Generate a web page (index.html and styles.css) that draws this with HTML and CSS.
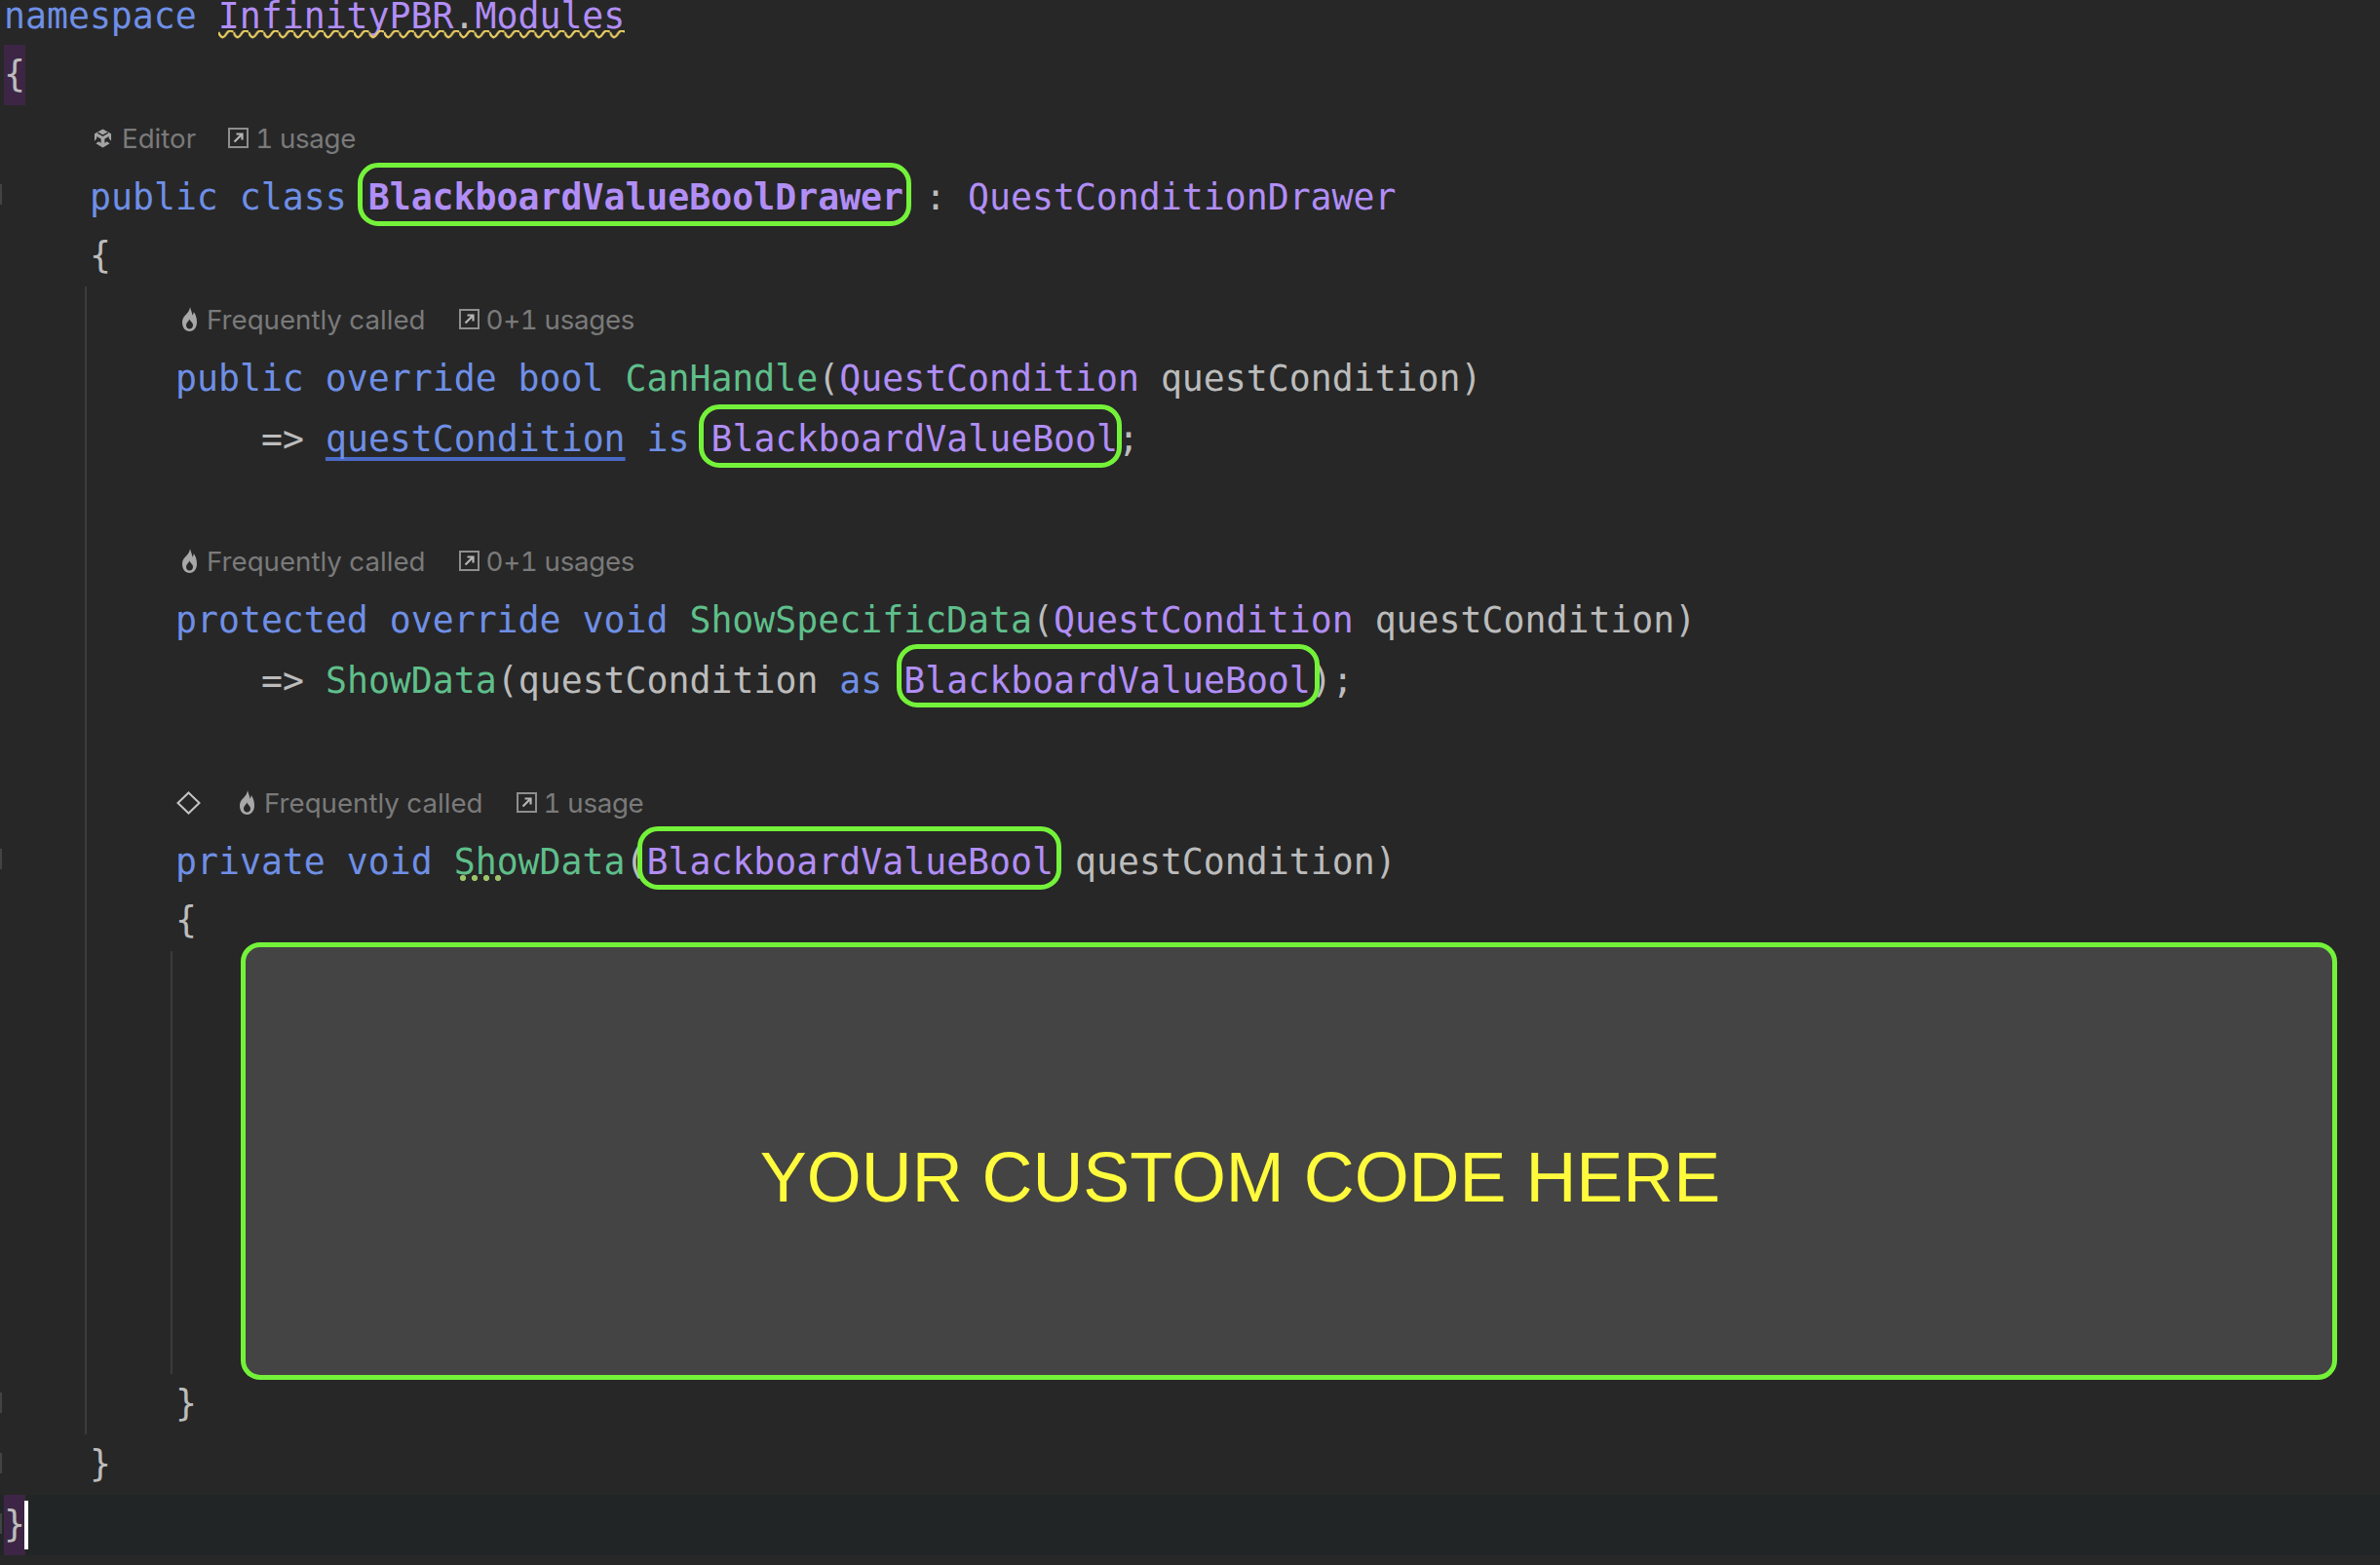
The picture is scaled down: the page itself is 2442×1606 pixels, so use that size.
FILE: index.html
```html
<!DOCTYPE html>
<html lang="en">
<head>
<meta charset="utf-8">
<title>BlackboardValueBoolDrawer</title>
<link rel="stylesheet" href="styles.css">
</head>
<body>
<svg class="defs" width="0" height="0" aria-hidden="true">
  <symbol id="i-link" viewBox="0 0 21 21">
    <rect x="1" y="1" width="19" height="19" fill="none" stroke="#8e8e8e" stroke-width="2"/>
    <path d="M6.5 14.5 14 7M8.5 6.5h6v6" fill="none" stroke="#b4b4b4" stroke-width="2.2"/>
  </symbol>
  <symbol id="i-flame" viewBox="0 0 15 25">
    <path fill-rule="evenodd" fill="#a8a8a8" d="M8 0C9 3.500 10 5.500 10.500 8.500C11.300 7.500 11.700 6.500 11.800 5C13.800 8 15 11 15 15.500C15 21 12 25 7.500 25C3 25 0 21 0 16C0 10.500 3.500 8.500 5.800 5.500C7 3.800 7.800 2 8 0ZM7.300 12.500C6.500 15 4 16 4 18.800C4 21 5.500 22.600 7.500 22.600C9.500 22.600 11 21 11 18.800C11 16 8.800 15.500 7.300 12.500Z"/>
  </symbol>
  <symbol id="i-unity" viewBox="0 0 20 20">
    <path fill="#a4a4a4" d="M10 0 19 5V13L16.500 10V8L12 10.500V15L14.500 13.500 17.500 15.500 10 20 2.500 15.500 5.500 13.500 8 15V10.500L3.500 8V10L1 13V5Z"/>
    <path d="M4.500 3.800 10 7 15.500 3.800" fill="none" stroke="#272727" stroke-width="1.400"/>
  </symbol>
  <symbol id="i-diamond" viewBox="0 0 25 24">
    <path d="M12.500 1.500 23.500 12 12.500 22.500 1.500 12Z" fill="none" stroke="#c4c4c4" stroke-width="2"/>
  </symbol>
  <pattern id="wave" width="15.45" height="9" patternUnits="userSpaceOnUse">
    <path d="M0 2 Q3.860 11 7.720 4.500 Q11.590 -2 15.450 2" fill="none" stroke="#e8cb62" stroke-width="2.400"/>
  </pattern>
</svg>

<main class="editor">
  <div class="line"><span class="kw">namespace</span> <span class="wavy ty">InfinityPBR<span class="pl">.</span>Modules<svg class="wave" width="417" height="9" aria-hidden="true"><rect width="417" height="9" fill="url(#wave)"/></svg></span></div>
  <div class="line brace"><span class="match pl">{</span></div>

  <section class="scope">
    <div class="inlay inlay-class">
      <span class="hint hint-unity"><svg class="ico ico-unity"><use href="#i-unity"/></svg>Editor</span>
      <span class="hint hint-usage"><svg class="ico ico-link"><use href="#i-link"/></svg>1 usage</span>
    </div>
    <div class="line mark"><span class="kw">public class</span> <span class="hl hl-class ty bold">BlackboardValueBoolDrawer</span> <span class="pl">:</span> <span class="ty">QuestConditionDrawer</span></div>
    <div class="line brace pl">{</div>

    <div class="guide">
      <div class="scope">
        <div class="inlay">
          <span class="hint hint-fire"><svg class="ico ico-flame"><use href="#i-flame"/></svg>Frequently called</span>
          <span class="hint hint-usage"><svg class="ico ico-link"><use href="#i-link"/></svg>0+1 usages</span>
        </div>
        <div class="line"><span class="kw">public override bool</span> <span class="fn">CanHandle</span><span class="pl">(</span><span class="ty">QuestCondition</span> <span class="pl">questCondition)</span></div>
        <div class="line cont"><span class="pl">=&gt;</span> <span class="kw ref">questCondition</span> <span class="kw">is</span> <span class="hl hl-is ty">BlackboardValueBool</span><span class="pl">;</span></div>
        <div class="line"></div>

        <div class="inlay">
          <span class="hint hint-fire"><svg class="ico ico-flame"><use href="#i-flame"/></svg>Frequently called</span>
          <span class="hint hint-usage"><svg class="ico ico-link"><use href="#i-link"/></svg>0+1 usages</span>
        </div>
        <div class="line"><span class="kw">protected override void</span> <span class="fn">ShowSpecificData</span><span class="pl">(</span><span class="ty">QuestCondition</span> <span class="pl">questCondition)</span></div>
        <div class="line cont"><span class="pl">=&gt;</span> <span class="fn">ShowData</span><span class="pl">(questCondition</span> <span class="kw">as</span> <span class="hl hl-as ty">BlackboardValueBool</span><span class="pl">);</span></div>
        <div class="line"></div>

        <div class="inlay inlay-bookmark">
          <svg class="ico ico-diamond"><use href="#i-diamond"/></svg>
          <span class="hint hint-fire"><svg class="ico ico-flame"><use href="#i-flame"/></svg>Frequently called</span>
          <span class="hint hint-usage"><svg class="ico ico-link"><use href="#i-link"/></svg>1 usage</span>
        </div>
        <div class="line mark"><span class="kw">private void</span> <span class="fn"><span class="dots">Sh</span>owData</span><span class="pl">(</span><span class="hl hl-param ty">BlackboardValueBool</span> <span class="pl">questCondition)</span></div>
        <div class="line brace pl">{</div>
        <div class="guide guide-inner">
          <div class="custom"><span class="custom-text">YOUR CUSTOM CODE HERE</span></div>
        </div>
        <div class="line brace pl mark-in">}</div>
      </div>
    </div>

    <div class="line brace pl mark">}</div>
  </section>

  <div class="line brace current"><span class="match pl">}</span><span class="caret"></span></div>
</main>
</body>
</html>
```
FILE: styles.css
```css
* { box-sizing: border-box; }

html, body {
  margin: 0;
  height: 1606px;
  overflow: hidden;
  background: #272727;
}

.defs { position: absolute; }

.editor {
  margin-top: -16px;
  padding-left: 4px;
  font-family: "DejaVu Sans Mono", "Liberation Mono", monospace;
  font-size: 36.5px;
  color: #bcbcbc;
}

.line {
  position: relative;
  height: 62px;
  line-height: 65px;
  white-space: pre;
}

.brace { line-height: 62px; }

.cont { padding-left: 88px; }

.kw { color: #6f8fe6; }
.ty { color: #b18ef6; }
.fn { color: #5fbf8b; }
.pl { color: #bcbcbc; }
.bold { font-weight: 700; }

.ref {
  text-decoration: underline 4px #4a69c4;
  text-decoration-skip-ink: none;
  text-underline-offset: 6px;
}

.wavy { position: relative; display: inline-block; height: 62px; }
.wave { position: absolute; left: 0; top: 47px; }

.match {
  display: inline-block;
  width: 22px;
  height: 62px;
  background: #3d2645;
}

.scope { padding-left: 88px; }

.guide {
  margin-left: -5px;
  padding-left: 3px;
  border-left: 2px solid #3b3b3b;
}

.guide-inner {
  position: relative;
  height: 434px;
}

/* gutter change ticks */
.mark::before,
.mark-in::before {
  content: "";
  position: absolute;
  top: 19px;
  width: 2px;
  height: 21px;
  background: #434343;
}
.mark::before { left: -92px; }
.scope .scope .mark::before { left: -180px; }
.mark-in::before { left: -180px; }

/* inlay hints */
.inlay {
  display: flex;
  align-items: center;
  gap: 34px;
  height: 62px;
  padding: 5px 0 0 7px;
  font-family: Inter, "Liberation Sans", sans-serif;
  font-size: 27.7px;
  font-variant-numeric: tabular-nums;
  color: #7a7a7a;
}
.inlay-class { padding-left: 4px; gap: 33px; }
.inlay-bookmark { padding-left: 1px; }

.hint {
  display: inline-flex;
  align-items: center;
  gap: 8px;
}
.hint-fire { gap: 10px; }
.hint-unity { gap: 10px; }
.hint-usage { gap: 7px; letter-spacing: -0.3px; }

.ico { display: block; flex: none; }
.ico-link { width: 21px; height: 21px; }
.ico-flame { width: 15px; height: 25px; }
.ico-unity { width: 19px; height: 20px; }
.ico-diamond { width: 25px; height: 24px; margin-right: 6px; }

/* green annotation boxes */
.hl {
  position: relative;
  display: inline-block;
  height: 62px;
}
.hl::after {
  content: "";
  position: absolute;
  border: 5px solid #74f23a;
  border-radius: 21px;
}
.hl-class::after { left: -11px; right: -8px; top: -3px; bottom: 0; }
.hl-is::after { left: -13px; right: -4px; top: -3px; bottom: 0; }
.hl-as::after { left: -7px; right: -9px; top: -5px; bottom: 2px; }
.hl-param::after { left: -9px; right: -8px; top: -4px; bottom: 1px; }

.custom {
  position: absolute;
  left: 70px;
  top: -9px;
  width: 2151px;
  height: 449px;
  display: flex;
  align-items: center;
  justify-content: center;
  padding: 34px 100px 0 0;
  background: #444444;
  border: 5px solid #74f23a;
  border-radius: 20px;
}
.custom-text {
  font-family: "Liberation Sans", Arial, sans-serif;
  font-size: 71.9px;
  line-height: 1;
  color: #fffb3c;
}

.dots { position: relative; display: inline-block; height: 62px; }
.dots::after {
  content: "";
  position: absolute;
  left: 6px;
  top: 46px;
  width: 48px;
  height: 6px;
  background: radial-gradient(circle at 3px 3px, #9dc46a 2.800px, transparent 3.300px) 0 0 / 12px 6px repeat-x;
}

.current {
  display: flex;
  align-items: center;
  margin-left: -4px;
  padding-left: 4px;
  background: #212526;
}
.current::before {
  content: "";
  position: absolute;
  left: 0;
  top: 19px;
  width: 2px;
  height: 21px;
  background: #434343;
}
.caret {
  width: 4px;
  height: 50px;
  margin-left: -1px;
  background: #ffffff;
}
```
